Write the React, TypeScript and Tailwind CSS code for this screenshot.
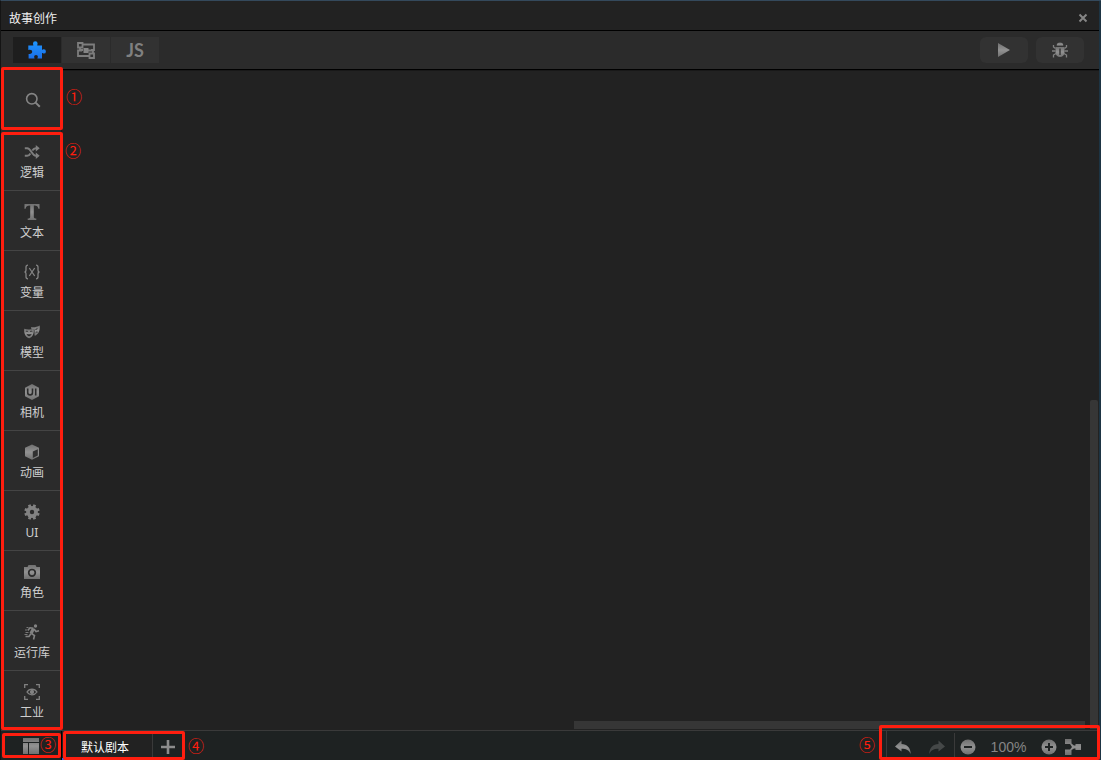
import type { ReactNode } from "react";
import clsx from "clsx";

const metal = "fill-[url(#metal)]";

type Category = {
  label: string;
  icon: ReactNode;
};

const categories: Category[] = [
  { label: "逻辑", icon: <ShuffleIcon /> },
  { label: "文本", icon: <TextIcon /> },
  { label: "变量", icon: <VariableIcon /> },
  { label: "模型", icon: <MasksIcon /> },
  { label: "相机", icon: <UiHexIcon /> },
  { label: "动画", icon: <CubeIcon /> },
  { label: "UI", icon: <GearIcon /> },
  { label: "角色", icon: <CameraIcon /> },
  { label: "运行库", icon: <RunnerIcon /> },
  { label: "工业", icon: <ScanEyeIcon /> }
];

export default function App() {
  return (
    <div className="flex h-screen flex-col overflow-hidden border-t border-l border-t-[#34495c] border-l-[#141414] bg-[#222222] font-['Noto_Sans','Noto_Sans_CJK_SC',sans-serif] text-xs text-[#cfcfcf]">
      <GradientDefs />
      <div className="flex min-h-0 flex-1 flex-col border-r-2 border-[#1d3443]">
        <TitleBar />
        <Toolbar />
        <div className="flex min-h-0 flex-1">
          <Sidebar />
          <Canvas />
        </div>
        <StatusBar />
      </div>
    </div>
  );
}

function TitleBar() {
  return (
    <header className="flex h-[30px] shrink-0 items-center justify-between border-b border-black bg-[#222222] pr-[11px] pl-2">
      <h1 className="pt-1.5 text-xs leading-4 text-[#f0f0f0]">故事创作</h1>
      <button type="button" aria-label="关闭" className="pt-1">
        <svg viewBox="0 0 10 10" className="size-2.5 fill-none stroke-[#858585] stroke-2">
          <path d="M1.5 1.5l7 7M8.5 1.5l-7 7" />
        </svg>
      </button>
    </header>
  );
}

function Toolbar() {
  return (
    <div className="flex h-[39px] shrink-0 items-center justify-between border-b border-black bg-[#2b2b2b] pr-[15px] pl-3">
      <div className="flex gap-px">
        <ModeButton label="积木" active>
          <PuzzleIcon />
        </ModeButton>
        <ModeButton label="流程">
          <FlowIcon />
        </ModeButton>
        <ModeButton label="脚本">
          <span className="font-['Lato',sans-serif] text-lg leading-5 font-bold text-[#808080]">
            JS
          </span>
        </ModeButton>
      </div>
      <div className="flex gap-2">
        <RunButton label="运行">
          <svg viewBox="0 0 12 14" className={clsx("h-3.5 w-3", metal)}>
            <path d="M0 0l12 7-12 7z" />
          </svg>
        </RunButton>
        <RunButton label="调试">
          <BugIcon />
        </RunButton>
      </div>
    </div>
  );
}

function ModeButton({
  label,
  active,
  children
}: {
  label: string;
  active?: boolean;
  children: ReactNode;
}) {
  return (
    <button
      type="button"
      aria-label={label}
      aria-pressed={!!active}
      className={clsx(
        "flex h-[26px] w-12 items-center justify-center",
        active ? "bg-[#1e1e1e]" : "bg-[#323232]"
      )}
    >
      {children}
    </button>
  );
}

function RunButton({ label, children }: { label: string; children: ReactNode }) {
  return (
    <button
      type="button"
      aria-label={label}
      className="flex h-[26px] w-12 items-center justify-center rounded-md bg-[#323232]"
    >
      {children}
    </button>
  );
}

function Sidebar() {
  return (
    <aside className="flex w-[61px] shrink-0 flex-col border-r border-[#1a1a1a] bg-[#2b2b2b]">
      <div className="relative">
        <button
          type="button"
          aria-label="搜索"
          className="flex h-[61px] w-full items-center justify-center pb-0.5 pl-1"
        >
          <svg viewBox="0 0 16 16" className="size-4 fill-none stroke-[#858585] stroke-[1.6]">
            <circle cx="6.8" cy="6.8" r="5.2" />
            <path d="M10.6 10.6l4.2 4.2" strokeWidth="2" />
          </svg>
        </button>
        <Callout mark="①" box="-top-[3px] -right-0.5 bottom-px left-0" text="top-3.5 left-[65px]" />
      </div>
      <nav className="relative">
        <ul>
          {categories.map((category) => (
            <li
              key={category.label}
              className="h-[60px] border-b border-[#444444] last:h-[59px] last:border-b-0"
            >
              <button
                type="button"
                className="flex size-full flex-col items-center gap-[5px] pt-[13px] pl-0.5 leading-4"
              >
                {category.icon}
                <span>{category.label}</span>
              </button>
            </li>
          ))}
        </ul>
        <Callout mark="②" box="top-px -right-0.5 bottom-0 left-0" text="top-[7px] left-[64px]" />
      </nav>
    </aside>
  );
}

function Canvas() {
  return (
    <main className="flex min-w-0 flex-1 items-end gap-[5px] border-t border-[#191919] pr-px pb-px">
      <div className="flex flex-1 justify-end">
        <div className="h-2 w-1/2 bg-[#363636]" />
      </div>
      <div className="h-1/2 w-2 rounded-t-xs bg-[#363636]" />
    </main>
  );
}

function StatusBar() {
  return (
    <footer className="flex h-[30px] shrink-0 border-t border-[#3a3a3a] bg-[#1e2222]">
      <div className="relative flex w-[61px] items-center justify-center border-r border-black">
        <button type="button" aria-label="布局">
          <svg viewBox="0 0 16 16" className={clsx("size-4", metal)}>
            <path d="M0 0h16v4H0zM0 5h5v11H0zM6 5h10v11H6z" />
          </svg>
        </button>
        <Callout mark="③" box="top-0.5 right-0 bottom-0.5 left-px" text="top-px left-[39px]" />
      </div>
      <div className="relative flex">
        <button
          type="button"
          className="w-[91px] border-r border-b-2 border-r-[#3a3a3a] border-b-[#2468f2] bg-[#222222] pt-1.5 pr-1 leading-4 text-white"
        >
          默认剧本
        </button>
        <button
          type="button"
          aria-label="添加剧本"
          className="flex w-[31px] items-center justify-center pt-0.5 pr-0.5"
        >
          <svg viewBox="0 0 14 14" className="size-3.5 fill-[#8c8c8c]">
            <path d="M5.7 0h2.6v5.7H14v2.6H8.300V14H5.700V8.300H0V5.700h5.700z" />
          </svg>
        </button>
        <Callout mark="④" box="inset-y-0 -right-px left-px" text="top-0.5 left-[126px]" />
      </div>
      <div className="relative ml-auto flex border-l border-[#3a3a3a] pt-0.5 pr-[18px]">
        <div className="flex items-center gap-[18px] border-r border-[#3a3a3a] pr-[9px] pl-2">
          <button type="button" aria-label="撤销">
            <svg viewBox="0 0 16 16" className={clsx("size-4", metal)}>
              <path d="M6.500 1.500L0 7.500l6.500 5V9.700c4.500 0 7.500 1.300 9.300 5.300C15.500 8.500 12 5.300 6.500 5z" />
            </svg>
          </button>
          <button type="button" aria-label="重做" disabled>
            <svg viewBox="0 0 16 16" className="size-4 fill-[#454848]">
              <path d="M9.500 1.500l6.500 6-6.500 5V9.700C5 9.700 2 11 .2 15 .5 8.500 4 5.300 9.500 5z" />
            </svg>
          </button>
        </div>
        <div className="flex items-center pl-[5px]">
          <button type="button" aria-label="缩小">
            <ZoomIcon />
          </button>
          <span className="w-[65px] text-center font-['Liberation_Sans',sans-serif] text-sm leading-5 text-[#858585]">
            100%
          </span>
          <button type="button" aria-label="放大">
            <ZoomIcon plus />
          </button>
          <button type="button" aria-label="整理" className="ml-2">
            <svg viewBox="0 0 16 16" className={clsx("size-4", metal)}>
              <path d="M0 0h6.500v4.500L9 6.500h1.500V5H16v6h-5.500V9.500H9L6.500 11v5H0v-5.500h5L7 8 5 5H0z" />
            </svg>
          </button>
        </div>
        <Callout mark="⑤" box="-top-1.5 -right-px bottom-0 -left-2" text="top-px -left-7" />
      </div>
    </footer>
  );
}

// red numbered frame laid over a region of the window
function Callout({ mark, box, text }: { mark: string; box: string; text: string }) {
  return (
    <>
      <span
        className={clsx(
          "pointer-events-none absolute z-10 rounded-xs border-3 border-[#ff1e0f]",
          box
        )}
      />
      <span
        className={clsx(
          "pointer-events-none absolute z-10 font-['Noto_Sans_CJK_SC',sans-serif] text-base leading-6 text-[#ff1e0f]",
          text
        )}
      >
        {mark}
      </span>
    </>
  );
}

function GradientDefs() {
  return (
    <svg className="absolute size-0" aria-hidden>
      <defs>
        <linearGradient id="metal" x1="0" y1="0" x2="0" y2="1">
          <stop offset="0" stopColor="#707070" />
          <stop offset="0.5" stopColor="#929292" />
          <stop offset="1" stopColor="#707070" />
        </linearGradient>
        <linearGradient id="blue" x1="0" y1="0" x2="0" y2="1">
          <stop offset="0" stopColor="#1e96ff" />
          <stop offset="1" stopColor="#1b6ee8" />
        </linearGradient>
      </defs>
    </svg>
  );
}

function ZoomIcon({ plus }: { plus?: boolean }) {
  return (
    <svg viewBox="0 0 16 16" className="size-4">
      <circle cx="8" cy="8" r="7.5" className={metal} />
      <path
        d={plus ? "M4 8h8M8 4v8" : "M4 8h8"}
        className="fill-none stroke-[#1e2222] stroke-2"
      />
    </svg>
  );
}

function PuzzleIcon() {
  return (
    <svg viewBox="0 0 18 18" className="size-[18px] fill-[url(#blue)]">
      <path d="M.3 4.500H5.300C5.600 3.900 5 3.600 5 2.500a2.300 2.200 0 0 1 4.600 0c0 1.100-.6 1.400-.3 2H14v4.200c.6.200.9-.5 1.900-.5a2 2.200 0 0 1 0 4.400c-1 0-1.300-.7-1.900-.5v5.400H9.500c-.3-.6.4-1 .4-1.800a1.900 1.600 0 0 0-3.800 0c0 .8.7 1.200.4 1.800H.6v-4.600c2.600.4 3.600-.8 3.600-2.200S3 8.300.3 8.900z" />
    </svg>
  );
}

function FlowIcon() {
  return (
    <svg viewBox="0 0 18 17" className="h-[17px] w-[18px] fill-none stroke-[#7d7d7d]" strokeWidth="1.8">
      <path d="M1 1h4.500v4.500H1zM12.500 11.500H17V16h-4.500z" />
      <path d="M5.500 2.500H17V8h-3M3 5.500V8h3M5 8.500H1V14h11.500M11 8.500h5v3" />
      <path d="M6.500 6h5v5h-5z" className="fill-[#858585] stroke-none" />
    </svg>
  );
}

function BugIcon() {
  return (
    <svg viewBox="0 0 16 16" className="size-4">
      <path d="M4.700 3.800a3.300 3.300 0 0 1 6.600 0z" className={metal} />
      <path d="M3.500 5h9v5.500a4.500 4.500 0 0 1-9 0z" className={metal} />
      <path
        d="M3.500 6.500L1.500 5V3M12.500 6.500l2-1.500V3M3.500 9H0M12.500 9H16M4 11.500l-2.500 1.500v2.500M12 11.500l2.500 1.500v2.500"
        className="fill-none stroke-[#808080] stroke-[1.3]"
      />
      <path d="M8 6.500V13" className="stroke-[#323232] stroke-[1.4]" />
    </svg>
  );
}

function ShuffleIcon() {
  return (
    <svg viewBox="0 0 16 16" className="size-4">
      <path
        d="M.8 4.200h2.400c3.800 0 4.800 7.600 8.600 7.600h1M.8 11.800h2.400c1.500 0 2.400-1 3.200-2.400M8.300 6.500c.9-1.400 1.900-2.300 3.500-2.300h1"
        className="fill-none stroke-[#7d7d7d] stroke-2"
      />
      <path d="M11.800 1l3.900 3.200-3.900 3.200zM11.800 8.600l3.900 3.200-3.900 3.200z" className="fill-[#808080]" />
    </svg>
  );
}

function TextIcon() {
  return (
    <svg viewBox="0 0 16 16" className={clsx("size-4", metal)}>
      <path d="M.5 0h15v4.800h-1C14 2.300 13 1.500 9.800 1.500v11c0 1.500.5 2 2.500 2V16H3.700v-1.500c2 0 2.500-.5 2.500-2v-11C3 1.500 2 2.300 1.500 4.800h-1z" />
    </svg>
  );
}

function VariableIcon() {
  return (
    <svg viewBox="0 0 16 16" className="size-4 fill-none stroke-[#858585] stroke-[1.3]">
      <path d="M4 1.200c-1.700 0-2 .7-2 2v2.600C2 7.300 1.500 8 .5 8c1 0 1.500.7 1.500 2.200v2.600c0 1.300.3 2 2 2" />
      <path d="M12 1.200c1.700 0 2 .7 2 2v2.600c0 1.500.5 2.200 1.500 2.200-1 0-1.500.7-1.500 2.200v2.600c0 1.300-.3 2-2 2" />
      <path d="M5.300 4l5.400 8M10.700 4l-5.400 8" />
    </svg>
  );
}

function MasksIcon() {
  return (
    <svg viewBox="0 0 16 16" className="size-4">
      <path d="M7 3.200c3 .5 6-.2 8.800-1.700.3 4.500-.8 8.500-4.600 10.200l-.7-.2V5.500L7 4.500z" className={metal} />
      <path d="M.2 4.800c3.200 1 6.400 1 9.600 0 .5 4.500-1.300 8.700-4.500 9.400C1.700 13.500-.3 9.300.2 4.800z" className={metal} />
      <path
        d="M1.800 7.600c.8-.5 1.600-.5 2.300.2M6 7.800c.7-.7 1.500-.7 2.300-.2M11.500 5.500l2-.8M11.600 8.800c.6-.7 1.300-.9 2-.6"
        className="fill-none stroke-[#2b2b2b] stroke-1"
      />
      <path d="M2.500 9.800c1.700.7 3.500.7 5.200 0-.5 1.600-1.400 2.400-2.600 2.400s-2.100-.8-2.600-2.400z" className="fill-[#2b2b2b]" />
    </svg>
  );
}

function UiHexIcon() {
  return (
    <svg viewBox="0 0 16 16" className="size-4">
      <path d="M8 0l7 3.800v8.400L8 16l-7-3.800V3.800z" className={metal} />
      <path
        d="M3.700 4.500v4a2.400 2.400 0 0 0 4.800 0v-4M11.700 4.500v7"
        className="fill-none stroke-[#2b2b2b] stroke-[1.6]"
      />
    </svg>
  );
}

function CubeIcon() {
  return (
    <svg viewBox="0 0 16 16" className="size-4">
      <path d="M8 .5l7 3.300v8.400l-7 3.500-7-3.500V3.800z" className={metal} />
      <path d="M8.800 7.600l5-2.300v6.200l-5 2.600z" className="fill-[#303030]" />
    </svg>
  );
}

function GearIcon() {
  return (
    <svg viewBox="0 0 16 16" className="size-4">
      <circle cx="8" cy="8" r="5.900" className="fill-[#828282]" />
      <path
        d="M5.200.8l5.600 14.400M10.800.8L5.200 15.200M.8 5.200l14.400 5.600M15.200 5.200L.8 10.800"
        className="fill-none stroke-[#828282] stroke-[2.8]"
      />
      <circle cx="8" cy="8" r="2.200" className="fill-[#2b2b2b]" />
    </svg>
  );
}

function CameraIcon() {
  return (
    <svg viewBox="0 0 16 16" className="size-4">
      <path d="M4.500 1h7l1 2H16v12H0V3h3.500z" className={metal} />
      <circle cx="8" cy="8.800" r="3.300" className="fill-none stroke-[#2b2b2b] stroke-[1.7]" />
    </svg>
  );
}

function RunnerIcon() {
  return (
    <svg viewBox="0 0 16 16" className="size-4 fill-none stroke-[#828282]">
      <circle cx="11.500" cy="2" r="1.700" className="fill-[#828282] stroke-none" />
      <path d="M9.500 4.500L7 9.500" strokeWidth="3.200" />
      <path d="M9.500 4.200L6 3.800 3.800 6.500M10 5l2 2.500 3-.8M7.500 9.500l3 2-1 4M7 9.500l-2 3H1.500" strokeWidth="1.6" />
      <path d="M2.500 3.500h2M1 6h2M1.500 8.500h3M.5 10.500h3" strokeWidth="0.9" />
    </svg>
  );
}

function ScanEyeIcon() {
  return (
    <svg viewBox="0 0 16 16" className="size-4 fill-none stroke-[#808080] stroke-[1.3]">
      <path d="M.7 4V.7H4M12 .7h3.300V4M15.300 12v3.300H12M4 15.300H.7V12" />
      <path d="M3 8c2.500-3.700 7.500-3.700 10 0-2.500 3.700-7.500 3.700-10 0z" />
      <circle cx="8" cy="8" r="1.500" className="fill-[#858585]" />
    </svg>
  );
}
